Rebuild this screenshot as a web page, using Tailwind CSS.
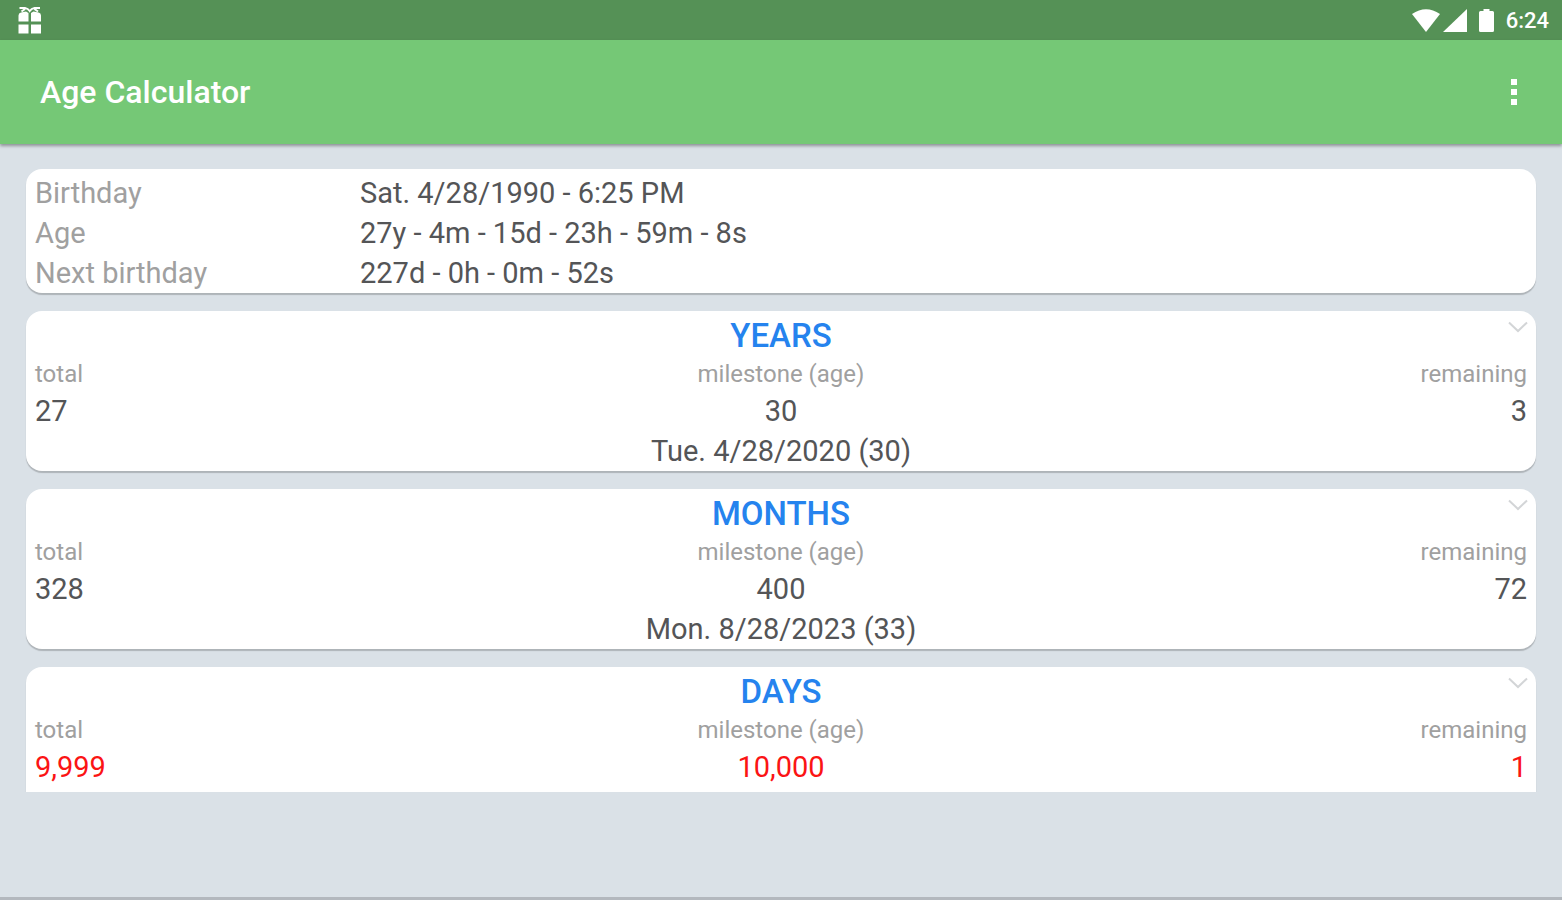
<!DOCTYPE html>
<html lang="en">
  <head>
    <meta charset="UTF-8" />
    <meta name="viewport" content="width=device-width, initial-scale=1.0" />
    <title>Age Calculator</title>
    <script src="https://cdn.jsdelivr.net/npm/@tailwindcss/browser@4"></script>
  </head>
  <body class="bg-[#dae1e7] font-[Roboto,sans-serif] text-[#545557]">
    <div class="flex flex-col h-screen">
      <!-- status bar -->
      <div class="flex h-10 shrink-0 items-center justify-between bg-[#559156] pl-[18px] pr-[13px] text-white">
        <svg class="h-7 w-6" viewBox="0 0 24 28" fill="currentColor" aria-hidden="true">
          <path d="M0.500 9.500Q0.500 7 3 6.500L8 5.500L10.500 7V15.500H0.500zM13 7L15.500 5.500L20.500 6.500Q23 7 23 9.500V15.500H13zM0.500 18.500H10.500V27.500H0.500zM13 18.500H23V27.500H13z" />
          <path d="M1.500 2H7Q10 2.500 11.700 5Q13.500 2.500 16.500 2H22M3.500 5.500L7 3M20 5.500L16.500 3" fill="none" stroke="currentColor" stroke-width="2" />
        </svg>
        <div class="flex items-center">
          <svg class="h-6 w-[84px]" viewBox="0 0 84 24" fill="currentColor" aria-hidden="true">
            <path d="M0 6Q14 -3.500 28 6L14 24z" />
            <path d="M31 24L55 1V24z" />
            <path d="M68.500 3H71.500V1H77.500V3H80.500Q82 3 82 4.500V22.500Q82 24 80.500 24H68.500Q67 24 67 22.500V4.500Q67 3 68.500 3z" />
          </svg>
          <span class="ml-[10px] text-[22px] font-medium">6:24</span>
        </div>
      </div>

      <!-- app bar -->
      <header class="z-10 flex h-26 shrink-0 items-center justify-between bg-[#75c876] px-10 text-white shadow-[0_2px_3px_rgba(0,0,0,0.35)]">
        <h1 class="text-[32px] font-medium">Age Calculator</h1>
        <button type="button" aria-label="More options" class="flex w-4 flex-col items-center gap-1">
          <span class="size-[6px] bg-white"></span>
          <span class="size-[6px] bg-white"></span>
          <span class="size-[6px] bg-white"></span>
        </button>
      </header>

      <main class="flex min-h-0 grow flex-col gap-[18px] overflow-hidden px-[26px] pt-[25px]">
        <section class="shrink-0 rounded-2xl bg-white px-[9px] pt-1 shadow-[0_2px_1px_rgba(0,0,0,0.2)]">
          <table class="w-full text-left text-[29px] leading-10">
            <tr>
              <th scope="row" class="w-[325px] font-normal text-[#a0a0a0]">Birthday</th>
              <td>Sat. 4/28/1990 - 6:25 PM</td>
            </tr>
            <tr>
              <th scope="row" class="font-normal text-[#a0a0a0]">Age</th>
              <td>27y - 4m - 15d - 23h - 59m - 8s</td>
            </tr>
            <tr>
              <th scope="row" class="font-normal text-[#a0a0a0]">Next birthday</th>
              <td>227d - 0h - 0m - 52s</td>
            </tr>
          </table>
        </section>

        <section class="relative min-h-40 shrink-0 rounded-2xl bg-white px-[9px] pt-1 shadow-[0_2px_1px_rgba(0,0,0,0.2)]">
          <h2 class="text-center text-[33px] leading-[42px] font-medium text-[#2583ee]">YEARS</h2>
          <button type="button" aria-label="Years options" class="absolute top-[10px] right-2">
            <svg class="h-3 w-5" viewBox="0 0 20 12" fill="none" stroke="#d3d5d7" stroke-width="2"><path d="M1 1.500L10 10L19 1.500" /></svg>
          </button>
          <table class="w-full table-fixed text-[29px] leading-10">
            <tr class="text-[24px] leading-[34px] text-[#a0a0a0]">
              <th class="text-left font-normal">total</th>
              <th class="text-center font-normal">milestone (age)</th>
              <th class="text-right font-normal">remaining</th>
            </tr>
            <tr>
              <td>27</td>
              <td class="text-center">30</td>
              <td class="text-right">3</td>
            </tr>
            <tr>
              <td colspan="3" class="text-center">Tue. 4/28/2020 (30)</td>
            </tr>
          </table>
        </section>

        <section class="relative min-h-40 shrink-0 rounded-2xl bg-white px-[9px] pt-1 shadow-[0_2px_1px_rgba(0,0,0,0.2)]">
          <h2 class="text-center text-[33px] leading-[42px] font-medium text-[#2583ee]">MONTHS</h2>
          <button type="button" aria-label="Months options" class="absolute top-[10px] right-2">
            <svg class="h-3 w-5" viewBox="0 0 20 12" fill="none" stroke="#d3d5d7" stroke-width="2"><path d="M1 1.500L10 10L19 1.500" /></svg>
          </button>
          <table class="w-full table-fixed text-[29px] leading-10">
            <tr class="text-[24px] leading-[34px] text-[#a0a0a0]">
              <th class="text-left font-normal">total</th>
              <th class="text-center font-normal">milestone (age)</th>
              <th class="text-right font-normal">remaining</th>
            </tr>
            <tr>
              <td>328</td>
              <td class="text-center">400</td>
              <td class="text-right">72</td>
            </tr>
            <tr>
              <td colspan="3" class="text-center">Mon. 8/28/2023 (33)</td>
            </tr>
          </table>
        </section>

        <section class="relative min-h-40 shrink-0 rounded-2xl bg-white px-[9px] pt-1 shadow-[0_2px_1px_rgba(0,0,0,0.2)]">
          <h2 class="text-center text-[33px] leading-[42px] font-medium text-[#2583ee]">DAYS</h2>
          <button type="button" aria-label="Days options" class="absolute top-[10px] right-2">
            <svg class="h-3 w-5" viewBox="0 0 20 12" fill="none" stroke="#d3d5d7" stroke-width="2"><path d="M1 1.500L10 10L19 1.500" /></svg>
          </button>
          <table class="w-full table-fixed text-[29px] leading-10">
            <tr class="text-[24px] leading-[34px] text-[#a0a0a0]">
              <th class="text-left font-normal">total</th>
              <th class="text-center font-normal">milestone (age)</th>
              <th class="text-right font-normal">remaining</th>
            </tr>
            <tr class="text-[#fb1414]">
              <td>9,999</td>
              <td class="text-center">10,000</td>
              <td class="text-right">1</td>
            </tr>
          </table>
        </section>
      </main>

      <footer class="h-27 shrink-0 border-b-3 border-[#b3b8be]"></footer>
    </div>
  </body>
</html>
